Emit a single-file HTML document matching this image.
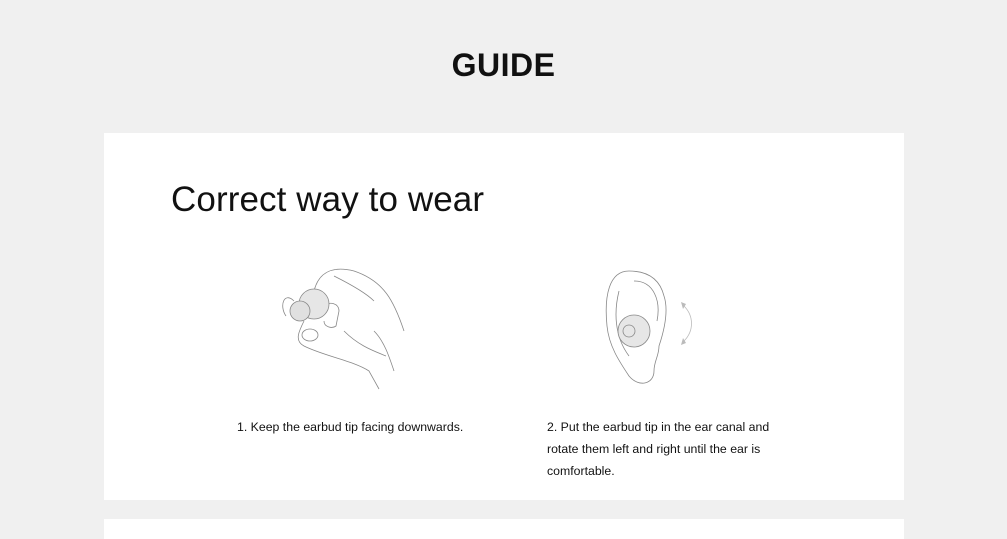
<!DOCTYPE html>
<html><head><meta charset="utf-8"><style>
body{margin:0;background:#f0f0f0;font-family:"Liberation Sans",sans-serif;width:1007px;height:527px;overflow:hidden;position:relative;color:#111}
h1{position:absolute;top:47px;left:0;width:1007px;text-align:center;margin:0;font-size:32px;font-weight:bold;letter-spacing:0.5px}
.card{position:absolute;left:104px;top:133px;width:800px;height:367px;background:#fff}
.card2{position:absolute;left:104px;top:519px;width:800px;height:20px;background:#fff}
h2{position:absolute;left:67px;top:47px;margin:0;font-size:35px;font-weight:normal;letter-spacing:0.1px}
.cap{position:absolute;font-size:12.3px;line-height:22px}
svg{position:absolute}
</style></head><body>
<h1>GUIDE</h1>
<div class="card">
<h2>Correct way to wear</h2>
<svg style="left:170px;top:128px" width="150" height="130" viewBox="0 0 150 130" fill="none" stroke="#888" stroke-width="0.8">
<path d="M40 30 C45 10 60 5 80 10 C110 20 120 40 130 70 M60 15 C70 20 90 30 100 40"/>
<path d="M20 40 C10 30 5 45 12 55 M30 60 C25 70 20 80 30 85 C50 95 80 100 95 110 L105 128"/>
<path d="M50 45 C55 40 65 42 65 50 L62 65 C58 68 50 66 50 60"/>
<path d="M100 70 C110 80 115 95 120 110 M70 70 C85 85 100 90 112 95"/>
<circle cx="40" cy="43" r="15" fill="#e6e6e6"/>
<circle cx="26" cy="50" r="10" fill="#e0e0e0"/>
<ellipse cx="36" cy="74" rx="8" ry="6"/>
</svg>
<svg style="left:495px;top:133px" width="100" height="120" viewBox="0 0 100 120" fill="none" stroke="#888" stroke-width="0.8">
<path d="M30 5 C10 5 5 30 8 60 C10 80 20 95 30 110 C40 122 55 118 55 105 C55 95 60 90 60 80 C65 65 70 45 65 30 C60 10 45 5 30 5Z"/>
<path d="M20 25 C15 45 15 70 30 90 M35 15 C55 15 62 35 58 55"/>
<circle cx="35" cy="65" r="16" fill="#e6e6e6"/>
<circle cx="30" cy="65" r="6"/>
<path d="M85 40 C95 50 95 65 85 75" stroke="#bbb"/>
<path d="M82 36 L87 38 L84 43 Z M82 79 L87 77 L84 72 Z" fill="#bbb" stroke="none"/>
</svg>
<div class="cap" style="left:133px;top:283px">1. Keep the earbud tip facing downwards.</div>
<div class="cap" style="left:443px;top:283px;width:245px">2. Put the earbud tip in the ear canal and rotate them left and right until the ear is comfortable.</div>
</div>
<div class="card2"></div>
</body></html>
